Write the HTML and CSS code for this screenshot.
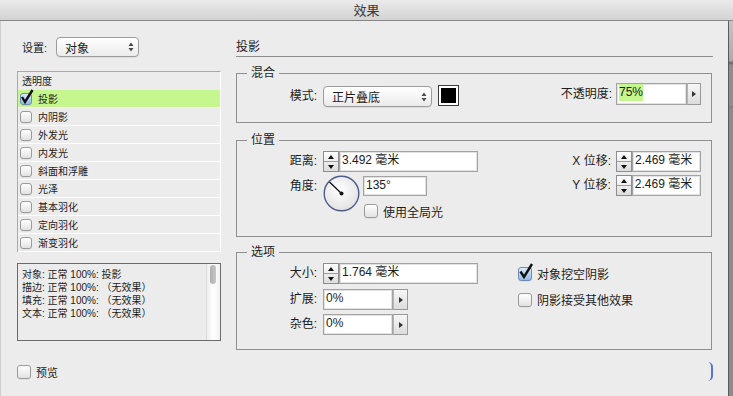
FILE: index.html
```html
<!DOCTYPE html>
<html lang="zh-CN">
  <head>
    <meta charset="UTF-8" />
    <title>效果</title>
    <link rel="stylesheet" href="styles.css">
  </head>
  <body>
    <div class="titlebar">效果</div>

    <div class="main">
      <div class="dialog">
        <div class="columns">
          <!-- 左側：設置 + 效果清單 -->
          <div class="left">
            <div class="setting">
              <span>设置:</span>
              <div class="select select-target">
                <span>对象</span>
                <svg class="updown" width="6" height="10" viewBox="0 0 6 10"><path d="M0.5 4L3 0.5L5.5 4Z M0.5 6L3 9.5L5.5 6Z" /></svg>
              </div>
            </div>

            <div class="effect-list">
              <div class="list-head">透明度</div>
              <div class="list-row active">
                <span class="check small checked"><svg width="14" height="14" viewBox="0 0 14 14"><path d="M2 5L5 10L12.5 -2" /></svg></span>投影
              </div>
              <div class="list-row"><span class="check small"></span>内阴影</div>
              <div class="list-row"><span class="check small"></span>外发光</div>
              <div class="list-row"><span class="check small"></span>内发光</div>
              <div class="list-row"><span class="check small"></span>斜面和浮雕</div>
              <div class="list-row"><span class="check small"></span>光泽</div>
              <div class="list-row"><span class="check small"></span>基本羽化</div>
              <div class="list-row"><span class="check small"></span>定向羽化</div>
              <div class="list-row"><span class="check small"></span>渐变羽化</div>
            </div>

            <div class="summary">
              <div class="summary-text">
                <div>对象: 正常 100%: 投影</div>
                <div>描边: 正常 100%: （无效果）</div>
                <div>填充: 正常 100%: （无效果）</div>
                <div>文本: 正常 100%: （无效果）</div>
              </div>
              <div class="scrollbar"><div class="thumb"></div></div>
            </div>
          </div>

          <!-- 右側：投影設定 -->
          <div class="right">
            <div class="heading">投影</div>

            <fieldset class="group">
              <legend>混合</legend>
              <div class="blend-row">
                <span class="label label-blend">模式:</span>
                <div class="select select-mode">
                  <span>正片叠底</span>
                  <svg class="updown" width="6" height="10" viewBox="0 0 6 10"><path d="M0.5 4L3 0.5L5.5 4Z M0.5 6L3 9.5L5.5 6Z" /></svg>
                </div>
                <div class="swatch"></div>
                <div class="opacity">
                  <span class="side-label tall">不透明度:</span>
                  <div class="field field-opacity"><span class="selected">75%</span></div>
                  <div class="arrow-btn tall"><i></i></div>
                </div>
              </div>
            </fieldset>

            <fieldset class="group group-pos">
              <legend>位置</legend>
              <div class="pos-body">
                <div class="pos-left">
                  <div class="row">
                    <span class="label">距离:</span>
                    <div class="spin"><b><i class="up"></i></b><b><i class="down"></i></b></div>
                    <div class="field field-long">3.492 毫米</div>
                  </div>
                  <div class="row angle-row">
                    <span class="label label-angle">角度:</span>
                    <svg class="dial" width="37" height="37" viewBox="0 0 37 37">
                      <defs>
                        <radialGradient id="dialFill" cx="0.45" cy="0.4" r="0.7">
                          <stop offset="0" stop-color="#ffffff" />
                          <stop offset="1" stop-color="#dedede" />
                        </radialGradient>
                      </defs>
                      <circle cx="18.5" cy="18.5" r="17.3" fill="url(#dialFill)" stroke="#4e5c8c" stroke-width="1.4" />
                      <line x1="18.5" y1="18.5" x2="6.5" y2="7" stroke="#111" stroke-width="1.3" />
                      <circle cx="18.5" cy="18.5" r="2" fill="#111" />
                    </svg>
                    <div class="angle-side">
                      <div class="field field-angle">135°</div>
                      <label class="check-row global">
                        <span class="check"></span>使用全局光
                      </label>
                    </div>
                  </div>
                </div>
                <div class="pos-right">
                  <div class="row">
                    <span class="side-label">X 位移:</span>
                    <div class="spin"><b><i class="up"></i></b><b><i class="down"></i></b></div>
                    <div class="field field-offset">2.469 毫米</div>
                  </div>
                  <div class="row row-y">
                    <span class="side-label">Y 位移:</span>
                    <div class="spin"><b><i class="up"></i></b><b><i class="down"></i></b></div>
                    <div class="field field-offset">2.469 毫米</div>
                  </div>
                </div>
              </div>
            </fieldset>

            <fieldset class="group group-opt">
              <legend>选项</legend>
              <div class="opt-body">
                <div class="opt-left">
                  <div class="row">
                    <span class="label">大小:</span>
                    <div class="spin"><b><i class="up"></i></b><b><i class="down"></i></b></div>
                    <div class="field field-long">1.764 毫米</div>
                  </div>
                  <div class="row row-spread">
                    <span class="label">扩展:</span>
                    <div class="field field-short">0%</div>
                    <div class="arrow-btn"><i></i></div>
                  </div>
                  <div class="row row-noise">
                    <span class="label">杂色:</span>
                    <div class="field field-short">0%</div>
                    <div class="arrow-btn"><i></i></div>
                  </div>
                </div>
                <div class="opt-right">
                  <label class="check-row">
                    <span class="check checked"><svg width="14" height="14" viewBox="0 0 14 14"><path d="M2.5 5.5L6 11L14 -2" /></svg></span>对象挖空阴影
                  </label>
                  <label class="check-row row-spread">
                    <span class="check"></span>阴影接受其他效果
                  </label>
                </div>
              </div>
            </fieldset>
          </div>
        </div>

        <div class="footer">
          <label class="check-row preview">
            <span class="check"></span>预览
          </label>
          <div class="focus-mark"></div>
        </div>
      </div>
      <div class="edge"></div>
    </div>
  </body>
</html>
```

FILE: styles.css
```css
body {
  margin: 0;
  width: 733px;
  height: 396px;
  overflow: hidden;
  background: #8d8d8d;
  font-family: "Liberation Sans", "Noto Sans CJK SC", sans-serif;
  font-size: 12px;
  color: #1c1c1c;
}

.titlebar {
  height: 20px;
  line-height: 21px;
  text-align: center;
  font-size: 13px;
  color: #3a3a3a;
  background: linear-gradient(#ebebeb, #d3d3d3);
  border-bottom: 1px solid #868686;
  overflow: hidden;
}

.main {
  display: flex;
  height: 375px;
}

.dialog {
  width: 727px;
  background: #ececec;
  border-left: 1px solid #cfcfcf;
  display: flex;
  flex-direction: column;
}

.edge {
  flex: 1;
  border-left: 1px solid #5a5a5a;
  background: linear-gradient(#c4c4c4 0, #a9a9a9 40px, #727272 41px, #727272 43px, #8e8e8e 44px, #8e8e8e 85px, #777 86px, #8c8c8c 87px);
}

.columns {
  display: flex;
  align-items: flex-start;
  padding-left: 16px;
  height: 330px;
}

/* ---------- left ---------- */

.left {
  width: 204px;
  padding-top: 16px;
}

.setting {
  display: flex;
  align-items: center;
  height: 20px;
  padding-left: 5px;
  font-size: 11px;
}

.select {
  box-sizing: border-box;
  display: flex;
  align-items: center;
  justify-content: space-between;
  border: 1px solid #9c9c9c;
  border-radius: 4px;
  background: linear-gradient(#ffffff, #ebebeb);
  box-shadow: 0 1px 0 rgba(0, 0, 0, 0.06);
  font-size: 12px;
}

.select .updown {
  fill: #4a4a4a;
}

.select-target {
  width: 83px;
  height: 20px;
  margin-left: 9px;
  padding: 0 4px 0 8px;
}

.effect-list {
  margin-top: 14px;
  border-top: 1px solid #a9a9a9;
  border-left: 1px solid #a9a9a9;
  border-right: 1px solid #ffffff;
  font-size: 10px;
}

.list-head {
  height: 18px;
  line-height: 19px;
  padding-left: 4px;
  overflow: hidden;
}

.list-row {
  display: flex;
  align-items: center;
  height: 17px;
  padding-left: 2px;
  border-bottom: 1px solid #ffffff;
}

.list-row .check {
  margin-right: 6px;
}

.list-row.active {
  background: #c5f78e;
}

.summary {
  box-sizing: border-box;
  display: flex;
  height: 78px;
  margin-top: 11px;
  border: 1px solid #6b6b6b;
}

.summary-text {
  flex: 1;
  padding: 4px 0 0 4px;
  font-size: 10px;
  line-height: 13px;
  white-space: nowrap;
}

.summary-text div {
  height: 13px;
}

.scrollbar {
  width: 14px;
  box-sizing: border-box;
  padding: 1px 4px 0 3px;
  border-left: 1px solid #dddddd;
  background: linear-gradient(to right, #ededed, #ffffff 45%, #f3f3f3);
}

.thumb {
  height: 19px;
  border-radius: 4px;
  background: linear-gradient(to right, #b0b0b0, #c6c6c6);
}

/* ---------- checkboxes ---------- */

.check {
  position: relative;
  flex: none;
  box-sizing: border-box;
  width: 14px;
  height: 14px;
  border: 1px solid #9a9a9a;
  border-radius: 3px;
  background: linear-gradient(#ffffff, #e2e2e2);
  box-shadow: 0 1px 0 rgba(0, 0, 0, 0.05);
}

.check.small {
  width: 12px;
  height: 12px;
}

.check.checked {
  border-color: #6e8bb2;
  background: linear-gradient(#dcebfa, #92bce7);
}

.check svg {
  position: absolute;
  left: -1px;
  top: -2px;
  overflow: visible;
}

.check svg path {
  fill: none;
  stroke: #111;
  stroke-width: 2.4;
  stroke-linejoin: miter;
}

.check-row {
  display: flex;
  align-items: center;
  height: 21px;
  font-size: 12px;
}

.check-row .check {
  margin-right: 5px;
}

/* ---------- right ---------- */

.right {
  width: 477px;
  margin-left: 15px;
  padding-top: 18px;
}

.heading {
  height: 16px;
  line-height: 16px;
  padding-bottom: 1px;
  border-bottom: 1px solid #8e8e8e;
}

.group {
  margin: 8px 0 0;
  padding: 0 10px 0 0;
  min-width: 0;
  width: 476px;
  box-sizing: border-box;
  border: 1px solid #8f8f8f;
}

.group legend {
  height: 16px;
  margin-left: 10px;
  padding: 0 4px;
  line-height: 16px;
}

.group-pos {
  margin-top: 9px;
}

.group-opt {
  margin-top: 7px;
}

.label {
  flex: none;
  width: 80px;
  height: 21px;
  margin-right: 6px;
  text-align: right;
  line-height: 21px;
}

.side-label {
  height: 21px;
  margin-right: 4px;
  line-height: 21px;
}

.tall {
  height: 22px;
  line-height: 22px;
}

.row {
  display: flex;
  align-items: flex-start;
  height: 21px;
}

.blend-row {
  display: flex;
  align-items: flex-start;
  height: 24px;
  margin: 2px 0 15px;
}

.label-blend {
  margin-top: 3px;
}

.select-mode {
  width: 109px;
  height: 21px;
  margin-top: 3px;
  padding: 0 4px 0 8px;
}

.swatch {
  box-sizing: border-box;
  width: 21px;
  height: 21px;
  margin: 2px 0 0 6px;
  border: 1px solid #3c3c3c;
  background: #000;
  box-shadow: inset 0 0 0 2px #ffffff;
}

.opacity {
  display: flex;
  margin-left: auto;
}

.field {
  box-sizing: border-box;
  height: 21px;
  padding: 1px 2px 0;
  line-height: 15px;
  background: #ffffff;
  border: 1px solid #a3a3a3;
  box-shadow: inset 0 0 0 1px #e2e2e2;
  white-space: nowrap;
  overflow: hidden;
}

.field-opacity {
  width: 71px;
  height: 22px;
}

.selected {
  background: #c5f78e;
  padding: 1px 0 2px;
}

.field-long {
  width: 139px;
}

.field-offset {
  width: 69px;
}

.field-angle {
  width: 64px;
  height: 20px;
}

.field-short {
  width: 70px;
}

.arrow-btn {
  box-sizing: border-box;
  display: flex;
  align-items: center;
  justify-content: center;
  width: 15px;
  height: 21px;
  border: 1px solid #999999;
  border-left-color: #b5b5b5;
  background: linear-gradient(#f7f7f7, #dcdcdc);
}

.arrow-btn.tall {
  width: 14px;
  height: 22px;
}

.arrow-btn i {
  border-top: 3px solid transparent;
  border-bottom: 3px solid transparent;
  border-left: 4px solid #333;
}

.spin {
  box-sizing: border-box;
  display: flex;
  flex-direction: column;
  flex: none;
  width: 16px;
  height: 21px;
  border: 1px solid #8d8d8d;
  background: linear-gradient(#fdfdfd, #dddddd);
}

.spin b {
  flex: 1;
  display: flex;
  align-items: center;
  justify-content: center;
}

.spin b:first-child {
  border-bottom: 1px solid #9d9d9d;
}

.spin .up {
  border-left: 3px solid transparent;
  border-right: 3px solid transparent;
  border-bottom: 4px solid #111;
}

.spin .down {
  border-left: 3px solid transparent;
  border-right: 3px solid transparent;
  border-top: 4px solid #111;
}

.pos-body {
  display: flex;
  height: 61px;
  margin: 3px 0 24px;
}

.angle-row {
  height: 36px;
  margin-top: 4px;
}

.label-angle {
  height: 20px;
  line-height: 20px;
}

.dial {
  flex: none;
  margin-top: -1px;
}

.angle-side {
  margin-left: 3px;
}

.global {
  height: 14px;
  margin-top: 8px;
  margin-left: 1px;
}

.pos-right {
  margin-left: auto;
}

.pos-right .spin {
  margin-left: 1px;
}

.row-y {
  margin-top: 3px;
}

.opt-body {
  display: flex;
  height: 72px;
  margin: 3px 0 14px;
}

.opt-left {
  width: 281px;
}

.row-spread {
  margin-top: 5px;
}

.row-noise {
  margin-top: 4px;
}

/* ---------- footer ---------- */

.footer {
  display: flex;
  align-items: center;
  justify-content: space-between;
  height: 20px;
  margin-top: 11px;
  padding: 0 15px 0 16px;
}

.preview {
  font-size: 11px;
}

.preview .check {
  margin-right: 5px;
}

.focus-mark {
  width: 3px;
  height: 19px;
  margin-top: -1px;
  border-right: 2px solid #5a72d4;
  border-radius: 0 6px 6px 0;
}
```
